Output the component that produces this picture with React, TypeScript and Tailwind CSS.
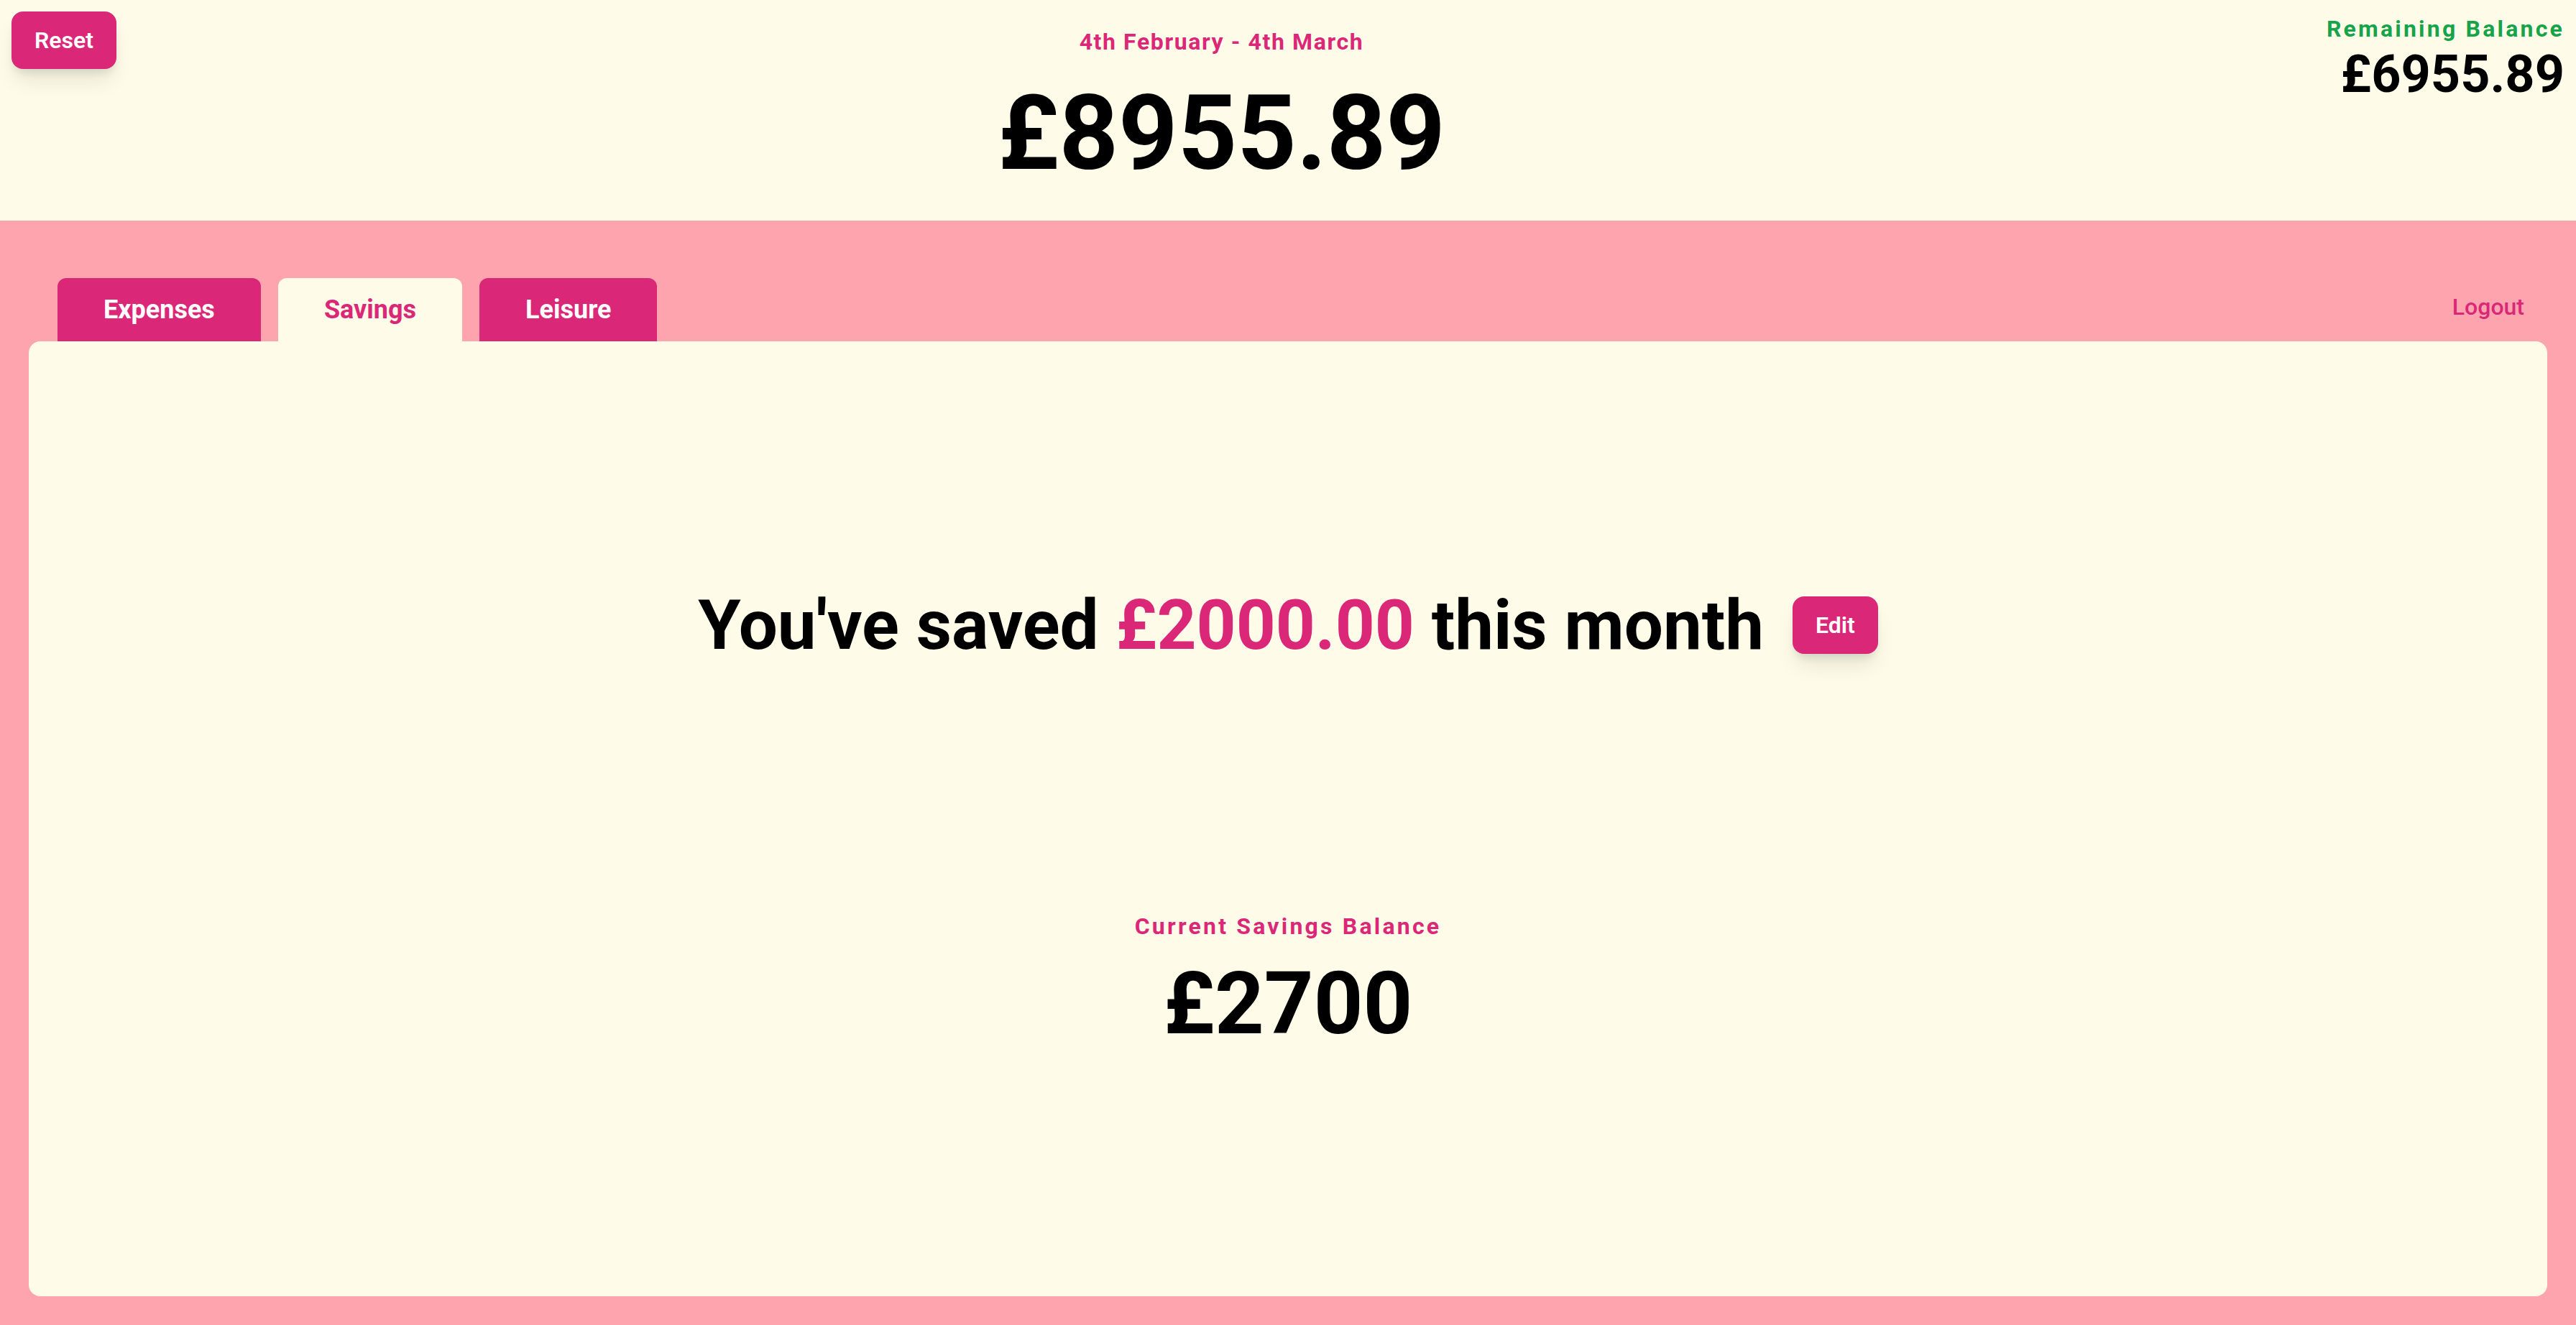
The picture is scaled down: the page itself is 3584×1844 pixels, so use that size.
const buttonClass =
  "rounded-2xl bg-[#db2777] px-8 py-4 text-[32px] leading-[48px] font-semibold text-white shadow-[0_20px_30px_-6px_rgba(0,0,0,0.1),0_8px_12px_-4px_rgba(0,0,0,0.1)]";

function Tab({ label, active = false }: { label: string; active?: boolean }) {
  return (
    <button
      role="tab"
      aria-selected={active}
      className={
        "rounded-t-xl px-16 py-4 text-[36px] leading-[56px] font-bold " +
        (active ? "bg-[#fefce8] text-[#db2777]" : "bg-[#db2777] text-white")
      }
    >
      {label}
    </button>
  );
}

export default function App() {
  return (
    <div className="flex min-h-screen flex-col bg-[#fda4af] font-['Roboto',sans-serif] text-black">
      <header className="flex items-start justify-between bg-[#fefce8] px-4 pt-4 pb-[49px]">
        <button className={buttonClass}>Reset</button>
        <div className="flex flex-col items-center pt-[18px]">
          <p className="text-[32px] leading-[48px] font-bold tracking-wider text-[#db2777]">
            4th February - 4th March
          </p>
          <h1 className="mt-8 text-[144px] leading-[144px] font-bold">£8955.89</h1>
        </div>
        <div className="flex flex-col items-end">
          <p className="text-[32px] leading-[48px] font-bold tracking-widest text-[#16a34a]">Remaining Balance</p>
          <p className="text-[72px] leading-[80px] font-bold">£6955.89</p>
        </div>
      </header>
      <main className="flex grow flex-col px-10 pt-20 pb-10">
        <div className="flex items-end justify-between pr-8 pl-10">
          <div role="tablist" className="flex gap-6">
            <Tab label="Expenses" />
            <Tab label="Savings" active />
            <Tab label="Leisure" />
          </div>
          <a href="#logout" className="mb-6 text-[32px] leading-[48px] font-medium text-[#db2777]">
            Logout
          </a>
        </div>
        <section className="flex grow flex-col items-center rounded-2xl bg-[#fefce8] pt-[339px]">
          <div className="flex items-center gap-10">
            <h2 className="text-[96px] leading-[112px] font-bold">
              You've saved <span className="text-[#db2777]">£2000.00</span> this month
            </h2>
            <button className={buttonClass}>Edit</button>
          </div>
          <p className="mt-[339px] text-[32px] leading-[48px] font-bold tracking-widest text-[#db2777]">
            Current Savings Balance
          </p>
          <p className="mt-3 text-[120px] leading-[144px] font-bold">£2700</p>
        </section>
      </main>
    </div>
  );
}
